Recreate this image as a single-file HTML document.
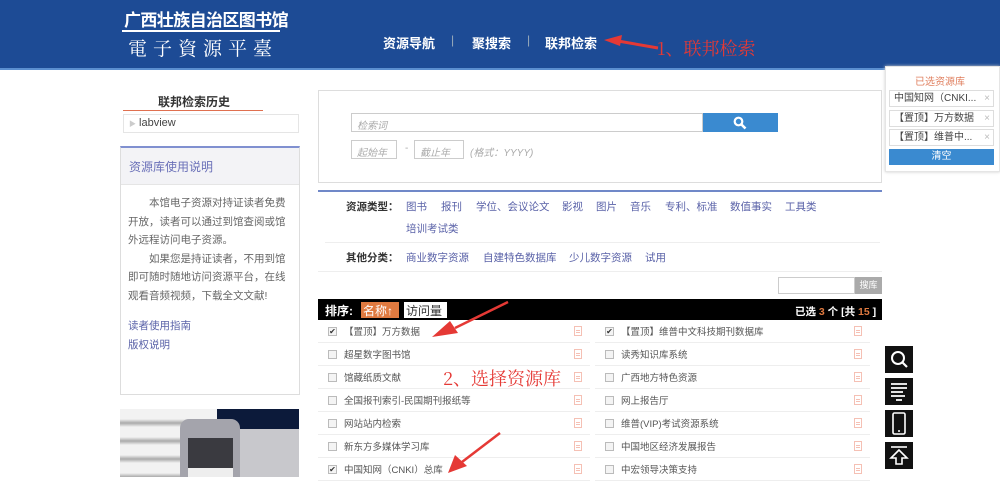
<!DOCTYPE html>
<html><head><meta charset="utf-8"><style>
*{margin:0;padding:0;box-sizing:border-box}
body{width:1000px;height:477px;overflow:hidden;background:#fff;font-family:"Liberation Sans","Noto Sans CJK SC",sans-serif;font-size:10px;color:#555;position:relative}
.a{position:absolute;white-space:nowrap}
.hd{left:0;top:0;width:1000px;height:70px;background:#1d4b95;border-bottom:2px solid #5b8fd0}
.nav{color:#fff;font-weight:bold;font-size:13px;top:33px}
.lnk{color:#5a62a8}
.t{top:199px;font-size:10.5px}
.row{position:absolute;height:23px;font-size:9.5px;color:#555;border-bottom:1px solid #eee;display:flex;align-items:center}
.cb{width:9px;height:9px;border:1px solid #bbb;background:#f4f4f4;margin:0 7px 0 10px;font-size:8px;line-height:7px;text-align:center;color:#333}
.pdf{position:absolute;right:8px;top:6px;width:8px;height:10px;border:1px solid #f5c0b4;background:linear-gradient(#f5c0b4,#f5c0b4) 1px 3px/4px 1px no-repeat,linear-gradient(#f5c0b4,#f5c0b4) 1px 5px/4px 1px no-repeat}
.ic{left:885px;width:28px;height:27px;background:#111}
.sel{left:889px;width:105px;height:17px;border:1px solid #ddd;font-size:10px;color:#444;padding-left:4px;line-height:15px}
.sel i{position:absolute;right:3px;color:#bbb;font-style:normal}
</style></head><body>
<div class="a hd"></div>
<div class="a" style="left:124px;top:6px;color:#fff;font-weight:bold;font-size:17px;letter-spacing:-0.6px">广西壮族自治区图书馆</div>
<div class="a" style="left:122px;top:30px;width:158px;height:2px;background:#fff"></div>
<div class="a" style="left:128px;top:34px;color:#fff;font-size:19px;letter-spacing:6px;font-family:'Noto Serif CJK SC',serif">電子資源平臺</div>
<div class="a nav" style="left:383px">资源导航</div>
<div class="a" style="left:451px;top:33px;color:#9ab;font-size:12px">|</div>
<div class="a nav" style="left:472px">聚搜索</div>
<div class="a" style="left:527px;top:33px;color:#9ab;font-size:12px">|</div>
<div class="a nav" style="left:545px">联邦检索</div>
<svg class="a" style="left:600px;top:34px" width="60" height="20"><path d="M58 14 L18 7" stroke="#e53935" stroke-width="3"/><path d="M4 6 L22 1 L20 12 Z" fill="#e53935"/></svg>
<div class="a" style="left:657px;top:35px;color:#e53935;font-size:18px;font-family:'Noto Serif CJK SC',serif">1、联邦检索</div>

<!-- left -->
<div class="a" style="left:158px;top:93px;font-weight:bold;font-size:12px;color:#333">联邦检索历史</div>
<div class="a" style="left:123px;top:110px;width:140px;height:1px;background:#e07050"></div>
<div class="a" style="left:123px;top:114px;width:176px;height:19px;border:1px solid #e5e5e5;font-size:11px;color:#444;line-height:17px;padding-left:5px"><span style="color:#ccc;font-size:7px">▶</span> labview</div>
<div class="a" style="left:120px;top:146px;width:180px;height:249px;border:1px solid #ddd;border-top:2px solid #8090d0"></div>
<div class="a" style="left:121px;top:148px;width:178px;height:37px;background:#f3f3f6;border-bottom:1px solid #e5e5e5;color:#6a70b8;font-size:12px;padding:10px 0 0 8px">资源库使用说明</div>
<div class="a" style="left:128px;top:194px;width:158px;font-size:10.5px;line-height:18.5px;color:#666;white-space:normal"><p style="text-indent:21px">本馆电子资源对持证读者免费开放，读者可以通过到馆查阅或馆外远程访问电子资源。</p><p style="text-indent:21px">如果您是持证读者，不用到馆即可随时随地访问资源平台，在线观看音频视频，下载全文文献!</p></div>
<div class="a lnk" style="left:128px;top:318px;font-size:10.5px">读者使用指南</div>
<div class="a lnk" style="left:128px;top:337px;font-size:10.5px">版权说明</div>
<div class="a" style="left:120px;top:409px;width:179px;height:68px;background:repeating-linear-gradient(180deg,#f2f2f2 0,#f2f2f2 10px,#aaa 14px,#f2f2f2 18px)"></div>
<div class="a" style="left:217px;top:409px;width:82px;height:20px;background:#0c1a3a"></div>
<div class="a" style="left:217px;top:429px;width:82px;height:48px;background:#c8c8cc"></div>
<div class="a" style="left:180px;top:419px;width:60px;height:58px;background:#a4a4ac;border-radius:9px 9px 0 0"></div>
<div class="a" style="left:188px;top:438px;width:45px;height:30px;background:#3a3a40"></div>
<div class="a" style="left:188px;top:468px;width:45px;height:9px;background:#eee"></div>

<!-- search -->
<div class="a" style="left:318px;top:90px;width:564px;height:93px;border:1px solid #ddd"></div>
<div class="a" style="left:351px;top:113px;width:352px;height:19px;border:1px solid #ccc;color:#aaa;font-style:italic;font-size:10px;padding:3px 5px">检索词</div>
<div class="a" style="left:703px;top:113px;width:75px;height:19px;background:#3a8ad0"></div>
<svg class="a" style="left:733px;top:116px" width="14" height="14"><circle cx="5.5" cy="5.5" r="3.8" fill="none" stroke="#fff" stroke-width="2.2"/><path d="M8.5 8.5L12.5 12.5" stroke="#fff" stroke-width="2.6"/></svg>
<div class="a" style="left:351px;top:140px;width:46px;height:19px;border:1px solid #ccc;color:#aaa;font-style:italic;padding:3px 5px">起始年</div>
<div class="a" style="left:405px;top:143px;color:#aaa">-</div>
<div class="a" style="left:414px;top:140px;width:50px;height:19px;border:1px solid #ccc;color:#aaa;font-style:italic;padding:3px 5px">截止年</div>
<div class="a" style="left:470px;top:144px;color:#aaa;font-style:italic">(格式：YYYY)</div>

<div class="a" style="left:318px;top:190px;width:564px;height:82px;border-top:2px solid #7088c8;border-bottom:1px solid #eee"></div>
<div class="a t" style="left:346px;font-weight:bold;color:#333">资源类型：</div>
<div class="a lnk t" style="left:406px">图书</div>
<div class="a lnk t" style="left:441px">报刊</div>
<div class="a lnk t" style="left:476px">学位、会议论文</div>
<div class="a lnk t" style="left:562px">影视</div>
<div class="a lnk t" style="left:596px">图片</div>
<div class="a lnk t" style="left:630px">音乐</div>
<div class="a lnk t" style="left:665px">专利、标准</div>
<div class="a lnk t" style="left:730px">数值事实</div>
<div class="a lnk t" style="left:785px">工具类</div>
<div class="a lnk t" style="left:406px;top:221px">培训考试类</div>
<div class="a" style="left:325px;top:242px;width:555px;height:1px;background:#eee"></div>
<div class="a t" style="left:346px;top:250px;font-weight:bold;color:#333">其他分类：</div>
<div class="a lnk t" style="left:406px;top:250px">商业数字资源</div>
<div class="a lnk t" style="left:483px;top:250px">自建特色数据库</div>
<div class="a lnk t" style="left:569px;top:250px">少儿数字资源</div>
<div class="a lnk t" style="left:645px;top:250px">试用</div>
<div class="a" style="left:778px;top:277px;width:77px;height:17px;border:1px solid #ccc"></div>
<div class="a" style="left:855px;top:277px;width:27px;height:17px;background:#aaa;color:#fff;font-size:9px;text-align:center;line-height:17px">搜库</div>

<div class="a" style="left:318px;top:299px;width:564px;height:21px;background:#000"></div>
<div class="a" style="left:325px;top:302px;color:#fff;font-weight:bold;font-size:12px">排序:</div>
<div class="a" style="left:361px;top:302px;width:38px;height:16px;background:#e07a40;color:#fff;font-size:12px;padding-left:2px">名称↑</div>
<div class="a" style="left:404px;top:302px;width:43px;height:16px;background:#fff;color:#333;font-size:12px;padding-left:2px">访问量</div>
<div class="a" style="left:795px;top:304px;color:#fff;font-weight:bold;font-size:10.5px">已选 <span style="color:#e07a40">3</span> 个 [共 <span style="color:#e07a40">15</span> ]</div>

<div class="row" style="left:318px;top:320px;width:272px"><span class="cb">✔</span>【置顶】万方数据<i class="pdf"></i></div>
<div class="row" style="left:595px;top:320px;width:275px"><span class="cb">✔</span>【置顶】维普中文科技期刊数据库<i class="pdf"></i></div>
<div class="row" style="left:318px;top:343px;width:272px"><span class="cb"></span>超星数字图书馆<i class="pdf"></i></div>
<div class="row" style="left:595px;top:343px;width:275px"><span class="cb"></span>读秀知识库系统<i class="pdf"></i></div>
<div class="row" style="left:318px;top:366px;width:272px"><span class="cb"></span>馆藏纸质文献<i class="pdf"></i></div>
<div class="row" style="left:595px;top:366px;width:275px"><span class="cb"></span>广西地方特色资源<i class="pdf"></i></div>
<div class="row" style="left:318px;top:389px;width:272px"><span class="cb"></span>全国报刊索引-民国期刊报纸等<i class="pdf"></i></div>
<div class="row" style="left:595px;top:389px;width:275px"><span class="cb"></span>网上报告厅<i class="pdf"></i></div>
<div class="row" style="left:318px;top:412px;width:272px"><span class="cb"></span>网站站内检索<i class="pdf"></i></div>
<div class="row" style="left:595px;top:412px;width:275px"><span class="cb"></span>维普(VIP)考试资源系统<i class="pdf"></i></div>
<div class="row" style="left:318px;top:435px;width:272px"><span class="cb"></span>新东方多媒体学习库<i class="pdf"></i></div>
<div class="row" style="left:595px;top:435px;width:275px"><span class="cb"></span>中国地区经济发展报告<i class="pdf"></i></div>
<div class="row" style="left:318px;top:458px;width:272px"><span class="cb">✔</span>中国知网（CNKI）总库<i class="pdf"></i></div>
<div class="row" style="left:595px;top:458px;width:275px"><span class="cb"></span>中宏领导决策支持<i class="pdf"></i></div>

<div class="a" style="left:443px;top:365px;color:#e53935;font-size:18px;font-family:'Noto Serif CJK SC',serif">2、选择资源库</div>
<svg class="a" style="left:420px;top:300px" width="90" height="40"><path d="M88 2 L35 28" stroke="#e53935" stroke-width="2.5"/><path d="M12 37 L30 21 L38 33 Z" fill="#e53935"/></svg>
<svg class="a" style="left:440px;top:430px" width="70" height="45"><path d="M60 3 L22 32" stroke="#e53935" stroke-width="2.5"/><path d="M8 43 L15 25 L27 36 Z" fill="#e53935"/></svg>

<!-- right panel -->
<div class="a" style="left:885px;top:66px;width:115px;height:106px;background:#fff;border:1px solid #e5e5e5;box-shadow:0 0 3px #ccc"></div>
<div class="a" style="left:915px;top:73px;color:#e08060;font-size:10px">已选资源库</div>
<div class="a sel" style="top:90px">中国知网（CNKI...<i>×</i></div>
<div class="a sel" style="top:110px">【置顶】万方数据<i>×</i></div>
<div class="a sel" style="top:129px">【置顶】维普中...<i>×</i></div>
<div class="a" style="left:889px;top:149px;width:105px;height:16px;background:#3a8ad0;color:#fff;font-size:10px;text-align:center;line-height:16px">清空</div>

<div class="a ic" style="top:346px"><svg width="28" height="27"><circle cx="13" cy="12" r="6" fill="none" stroke="#fff" stroke-width="2"/><path d="M17.5 16.5L22 21" stroke="#fff" stroke-width="2.2"/></svg></div>
<div class="a ic" style="top:378px"><svg width="28" height="27"><path d="M6 6h16M6 10h16M6 14h12M6 18h14M11 22h6" stroke="#fff" stroke-width="1.8"/></svg></div>
<div class="a ic" style="top:410px"><svg width="28" height="27"><rect x="8" y="3" width="12" height="21" rx="1.5" fill="none" stroke="#fff" stroke-width="1.6"/><circle cx="14" cy="21" r="1" fill="#fff"/></svg></div>
<div class="a ic" style="top:442px"><svg width="28" height="27"><path d="M6 5h16" stroke="#fff" stroke-width="1.6"/><path d="M14 8L6 16h5v6h6v-6h5Z" fill="none" stroke="#fff" stroke-width="1.6"/></svg></div>
</body></html>
